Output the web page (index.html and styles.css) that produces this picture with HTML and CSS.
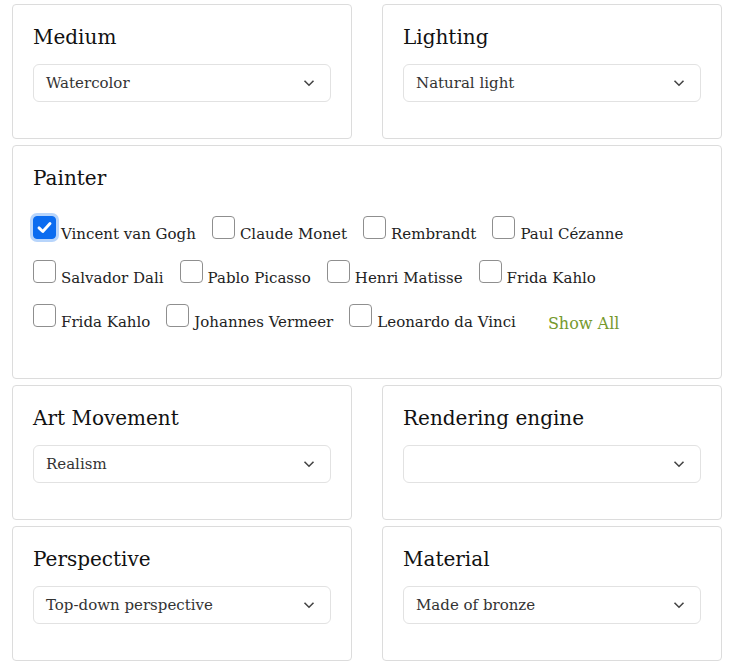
FILE: index.html
```html
<!DOCTYPE html>
<html lang="en">
<head>
    <meta charset="UTF-8">
    <meta name="viewport" content="width=device-width, initial-scale=1.0">
    <title>Prompt Options</title>
    <link rel="stylesheet" href="styles.css">
</head>
<body>
    <div class="options">
        <div class="card">
            <h3>Medium</h3>
            <div class="select">
                <span>Watercolor</span>
                <svg class="chevron" viewBox="0 0 12 8"><path d="M1.5 1.8 6 6.2l4.5-4.4"/></svg>
            </div>
        </div>
        <div class="card">
            <h3>Lighting</h3>
            <div class="select">
                <span>Natural light</span>
                <svg class="chevron" viewBox="0 0 12 8"><path d="M1.5 1.8 6 6.2l4.5-4.4"/></svg>
            </div>
        </div>

        <div class="card wide">
            <h3>Painter</h3>
            <div class="painters">
                <label class="painter"><span class="box checked"><svg viewBox="0 0 16 16"><path d="M3.8 8.3 6.7 11l5.5-6"/></svg></span>Vincent van Gogh</label>
                <label class="painter"><span class="box"></span>Claude Monet</label>
                <label class="painter"><span class="box"></span>Rembrandt</label>
                <label class="painter"><span class="box"></span>Paul Cézanne</label>
                <label class="painter"><span class="box"></span>Salvador Dali</label>
                <label class="painter"><span class="box"></span>Pablo Picasso</label>
                <label class="painter"><span class="box"></span>Henri Matisse</label>
                <label class="painter"><span class="box"></span>Frida Kahlo</label>
                <label class="painter"><span class="box"></span>Frida Kahlo</label>
                <label class="painter"><span class="box"></span>Johannes Vermeer</label>
                <label class="painter"><span class="box"></span>Leonardo da Vinci</label>
                <a class="show-all" href="#">Show All</a>
            </div>
        </div>

        <div class="card">
            <h3>Art Movement</h3>
            <div class="select">
                <span>Realism</span>
                <svg class="chevron" viewBox="0 0 12 8"><path d="M1.5 1.8 6 6.2l4.5-4.4"/></svg>
            </div>
        </div>
        <div class="card">
            <h3>Rendering engine</h3>
            <div class="select">
                <span></span>
                <svg class="chevron" viewBox="0 0 12 8"><path d="M1.5 1.8 6 6.2l4.5-4.4"/></svg>
            </div>
        </div>

        <div class="card">
            <h3>Perspective</h3>
            <div class="select">
                <span>Top-down perspective</span>
                <svg class="chevron" viewBox="0 0 12 8"><path d="M1.5 1.8 6 6.2l4.5-4.4"/></svg>
            </div>
        </div>
        <div class="card">
            <h3>Material</h3>
            <div class="select">
                <span>Made of bronze</span>
                <svg class="chevron" viewBox="0 0 12 8"><path d="M1.5 1.8 6 6.2l4.5-4.4"/></svg>
            </div>
        </div>
    </div>
</body>
</html>
```

FILE: styles.css
```css
body {
    font-family: "DejaVu Serif", "Liberation Serif", serif;
    background-color: #fff;
    color: #222;
    margin: 0;
    padding: 4px 17px 4px 12px;
}
.options {
    display: grid;
    grid-template-columns: 340px 340px;
    column-gap: 30px;
    row-gap: 6px;
}
.card {
    border: 1px solid #dcdcdc;
    border-radius: 4px;
    padding: 18px 20px 20px;
}
.card.wide {
    grid-column: 1 / 3;
    padding-bottom: 50px;
}
.card h3 {
    font-size: 20px;
    font-weight: normal;
    line-height: 28px;
    color: #111;
    margin: 0 0 13px;
}
.select {
    display: flex;
    align-items: center;
    justify-content: space-between;
    height: 36px;
    border: 1px solid #e2e2e2;
    border-radius: 6px;
    padding: 0 15px 0 12px;
    margin-bottom: 16px;
    font-size: 15px;
    color: #333;
}
.chevron {
    width: 12px;
    height: 8px;
    fill: none;
    stroke: #444;
    stroke-width: 1.6;
}
.painters {
    display: flex;
    flex-wrap: wrap;
    align-items: flex-start;
    column-gap: 16px;
    row-gap: 20px;
    margin-top: 24px;
}
.painter {
    display: flex;
    align-items: baseline;
    gap: 5px;
    height: 24px;
    font-size: 15px;
    line-height: 28px;
    color: #222;
    cursor: pointer;
}
.box {
    display: block;
    width: 21px;
    height: 21px;
    border: 1px solid #8f8f8f;
    border-radius: 4px;
    background: #fff;
}
.box.checked {
    background: #0b6cf0;
    border-color: #0b6cf0;
    box-shadow: 0 0 0 3px #b8d5fb;
}
.box svg {
    display: block;
    width: 21px;
    height: 21px;
    fill: none;
    stroke: #fff;
    stroke-width: 2.2;
    stroke-linecap: round;
    stroke-linejoin: round;
}
.show-all {
    font-size: 16px;
    line-height: 24px;
    color: #76992d;
    text-decoration: none;
    margin-left: 16px;
    position: relative;
    top: 8px;
}
```
